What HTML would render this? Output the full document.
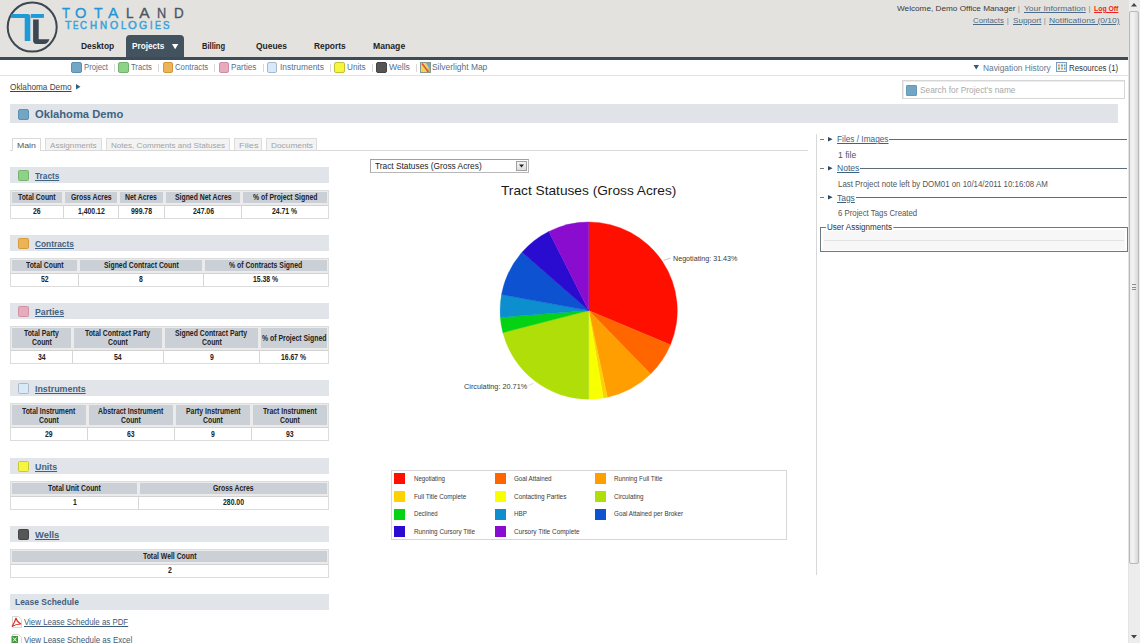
<!DOCTYPE html>
<html><head><meta charset="utf-8"><style>
html,body{margin:0;padding:0;}
body{width:1140px;height:643px;overflow:hidden;position:relative;background:#fff;font-family:"Liberation Sans", sans-serif;}
div,span,svg{box-sizing:border-box;}
</style></head><body>
<div style="position:absolute;left:0px;top:0px;width:1128px;height:57px;background:#e4e2de;"></div>
<div style="position:absolute;left:0px;top:57px;width:1128px;height:3px;background:#3c4b56;"></div>
<div style="position:absolute;left:126px;top:35px;width:58px;height:22px;background:#42525e;border-radius:4px 4px 0 0;"></div>
<svg style="position:absolute;left:0;top:0" width="60" height="56" viewBox="0 0 60 56">
<circle cx="32.2" cy="27.1" r="24.5" fill="none" stroke="#3b4752" stroke-width="2"/>
<path d="M11.2 14 H27.5 Q30.3 14 30.3 16.8 V41 H24.7 V17.9 H11.2 Z" fill="#1e9ad6"/>
<rect x="30.8" y="14" width="13.1" height="3.9" fill="#1e9ad6"/>
<path d="M33.1 19.6 H38.7 V39.2 H49.5 Q48 43.9 44 43.9 H36.5 Q33.1 43.9 33.1 40.5 Z" fill="#3b4752"/>
</svg>
<div style="position:absolute;left:0px;top:75px;width:1128px;height:1px;background:#e2e2e2;"></div>
<div style="position:absolute;left:1128px;top:0px;width:12px;height:643px;background:#ededed;border-left:1px solid #e3e3e3;"></div>
<div style="position:absolute;left:1129px;top:11px;width:10px;height:553px;background:linear-gradient(90deg,#e9e9e9,#f4f4f4 35%,#d9d9dd);border:1px solid #b9b9b9;border-radius:2px;"></div>
<div style="position:absolute;left:1132px;top:284px;width:4px;height:1.2px;background:#8c8c8c;"></div>
<div style="position:absolute;left:1132px;top:286.5px;width:4px;height:1.2px;background:#8c8c8c;"></div>
<div style="position:absolute;left:1132px;top:289px;width:4px;height:1.2px;background:#8c8c8c;"></div>
<svg style="position:absolute;left:1131px;top:3px" width="6" height="4"><path d="M0 3.5 L3 0 L6 3.5Z" fill="#444"/></svg>
<svg style="position:absolute;left:1131px;top:635px" width="6" height="4"><path d="M0 0 L3 3.5 L6 0Z" fill="#444"/></svg>
<div style="position:absolute;left:10px;top:104px;width:1108px;height:19px;background:#e0e3e7;"></div>
<div style="position:absolute;left:18px;top:109px;width:11px;height:11px;background:#73a6c5;border:1px solid #5d91b3;border-radius:2px;"></div>
<div style="position:absolute;left:902px;top:80px;width:223px;height:19px;background:#fff;border:1px solid #d6d6d6;box-shadow:inset 1px 1px 0 #ececec;"></div>
<div style="position:absolute;left:906px;top:85px;width:11px;height:11px;background:#73a6c5;border:1px solid #6699b9;border-radius:1px;"></div>
<div style="position:absolute;left:10px;top:150px;width:798px;height:1px;background:#d9d9d9;"></div>
<div style="position:absolute;left:12px;top:138px;width:29px;height:13px;background:#fff;border:1px solid #d9d9d9;border-bottom:none;"></div>
<div style="position:absolute;left:45px;top:138px;width:57px;height:12px;background:#f3f3f3;border:1px solid #dcdcdc;border-bottom:none;"></div>
<div style="position:absolute;left:106px;top:138px;width:124px;height:12px;background:#f3f3f3;border:1px solid #dcdcdc;border-bottom:none;"></div>
<div style="position:absolute;left:234px;top:138px;width:28px;height:12px;background:#f3f3f3;border:1px solid #dcdcdc;border-bottom:none;"></div>
<div style="position:absolute;left:266px;top:138px;width:51px;height:12px;background:#f3f3f3;border:1px solid #dcdcdc;border-bottom:none;"></div>
<div style="position:absolute;left:816px;top:134px;width:1px;height:441px;background:#d8d8d8;"></div>
<div style="position:absolute;left:10px;top:167px;width:319px;height:16px;background:#e1e4e8;"></div>
<div style="position:absolute;left:18px;top:170px;width:11px;height:11px;background:#8fd08a;border:1px solid #73b56e;border-radius:1.5px;"></div>
<div style="position:absolute;left:10px;top:190px;width:319px;height:29px;background:#fff;border:1px solid #dcdcdc;"></div>
<div style="position:absolute;left:11px;top:191px;width:317px;height:14px;background:#ebebeb;"></div>
<div style="position:absolute;left:11px;top:205px;width:317px;height:1px;background:#d2d2d2;"></div>
<div style="position:absolute;left:12px;top:192px;width:50px;height:11px;background:#cad0d6;"></div>
<div style="position:absolute;left:65px;top:192px;width:52px;height:11px;background:#cad0d6;"></div>
<div style="position:absolute;left:120px;top:192px;width:43px;height:11px;background:#cad0d6;"></div>
<div style="position:absolute;left:166px;top:192px;width:74px;height:11px;background:#cad0d6;"></div>
<div style="position:absolute;left:243px;top:192px;width:84px;height:11px;background:#cad0d6;"></div>
<div style="position:absolute;left:63px;top:205px;width:1px;height:13px;background:#d6d6d6;"></div>
<div style="position:absolute;left:118px;top:205px;width:1px;height:13px;background:#d6d6d6;"></div>
<div style="position:absolute;left:164px;top:205px;width:1px;height:13px;background:#d6d6d6;"></div>
<div style="position:absolute;left:241px;top:205px;width:1px;height:13px;background:#d6d6d6;"></div>
<div style="position:absolute;left:10px;top:235px;width:319px;height:16px;background:#e1e4e8;"></div>
<div style="position:absolute;left:18px;top:238px;width:11px;height:11px;background:#eeb356;border:1px solid #d39a3e;border-radius:1.5px;"></div>
<div style="position:absolute;left:10px;top:258px;width:319px;height:29px;background:#fff;border:1px solid #dcdcdc;"></div>
<div style="position:absolute;left:11px;top:259px;width:317px;height:14px;background:#ebebeb;"></div>
<div style="position:absolute;left:11px;top:273px;width:317px;height:1px;background:#d2d2d2;"></div>
<div style="position:absolute;left:12px;top:260px;width:65px;height:11px;background:#cad0d6;"></div>
<div style="position:absolute;left:80px;top:260px;width:122px;height:11px;background:#cad0d6;"></div>
<div style="position:absolute;left:205px;top:260px;width:122px;height:11px;background:#cad0d6;"></div>
<div style="position:absolute;left:78px;top:273px;width:1px;height:13px;background:#d6d6d6;"></div>
<div style="position:absolute;left:203px;top:273px;width:1px;height:13px;background:#d6d6d6;"></div>
<div style="position:absolute;left:10px;top:303px;width:319px;height:16px;background:#e1e4e8;"></div>
<div style="position:absolute;left:18px;top:306px;width:11px;height:11px;background:#e8aabd;border:1px solid #cf92a5;border-radius:1.5px;"></div>
<div style="position:absolute;left:10px;top:326px;width:319px;height:38px;background:#fff;border:1px solid #dcdcdc;"></div>
<div style="position:absolute;left:11px;top:327px;width:317px;height:23px;background:#ebebeb;"></div>
<div style="position:absolute;left:11px;top:350px;width:317px;height:1px;background:#d2d2d2;"></div>
<div style="position:absolute;left:12px;top:328px;width:59px;height:20px;background:#cad0d6;"></div>
<div style="position:absolute;left:74px;top:328px;width:88px;height:20px;background:#cad0d6;"></div>
<div style="position:absolute;left:165px;top:328px;width:93px;height:20px;background:#cad0d6;"></div>
<div style="position:absolute;left:261px;top:328px;width:66px;height:20px;background:#cad0d6;"></div>
<div style="position:absolute;left:72px;top:350px;width:1px;height:13px;background:#d6d6d6;"></div>
<div style="position:absolute;left:163px;top:350px;width:1px;height:13px;background:#d6d6d6;"></div>
<div style="position:absolute;left:259px;top:350px;width:1px;height:13px;background:#d6d6d6;"></div>
<div style="position:absolute;left:10px;top:380px;width:319px;height:16px;background:#e1e4e8;"></div>
<div style="position:absolute;left:18px;top:383px;width:11px;height:11px;background:#d8e9f8;border:1px solid #a9b9c8;border-radius:1.5px;"></div>
<div style="position:absolute;left:10px;top:403px;width:319px;height:38px;background:#fff;border:1px solid #dcdcdc;"></div>
<div style="position:absolute;left:11px;top:404px;width:317px;height:23px;background:#ebebeb;"></div>
<div style="position:absolute;left:11px;top:427px;width:317px;height:1px;background:#d2d2d2;"></div>
<div style="position:absolute;left:12px;top:405px;width:74px;height:20px;background:#cad0d6;"></div>
<div style="position:absolute;left:89px;top:405px;width:84px;height:20px;background:#cad0d6;"></div>
<div style="position:absolute;left:176px;top:405px;width:74px;height:20px;background:#cad0d6;"></div>
<div style="position:absolute;left:253px;top:405px;width:74px;height:20px;background:#cad0d6;"></div>
<div style="position:absolute;left:87px;top:427px;width:1px;height:13px;background:#d6d6d6;"></div>
<div style="position:absolute;left:174px;top:427px;width:1px;height:13px;background:#d6d6d6;"></div>
<div style="position:absolute;left:251px;top:427px;width:1px;height:13px;background:#d6d6d6;"></div>
<div style="position:absolute;left:10px;top:458px;width:319px;height:16px;background:#e1e4e8;"></div>
<div style="position:absolute;left:18px;top:461px;width:11px;height:11px;background:#f6f540;border:1px solid #c9c833;border-radius:1.5px;"></div>
<div style="position:absolute;left:10px;top:481px;width:319px;height:29px;background:#fff;border:1px solid #dcdcdc;"></div>
<div style="position:absolute;left:11px;top:482px;width:317px;height:14px;background:#ebebeb;"></div>
<div style="position:absolute;left:11px;top:496px;width:317px;height:1px;background:#d2d2d2;"></div>
<div style="position:absolute;left:12px;top:483px;width:125px;height:11px;background:#cad0d6;"></div>
<div style="position:absolute;left:140px;top:483px;width:187px;height:11px;background:#cad0d6;"></div>
<div style="position:absolute;left:138px;top:496px;width:1px;height:13px;background:#d6d6d6;"></div>
<div style="position:absolute;left:10px;top:526px;width:319px;height:16px;background:#e1e4e8;"></div>
<div style="position:absolute;left:18px;top:529px;width:11px;height:11px;background:#565656;border:1px solid #444;border-radius:1.5px;"></div>
<div style="position:absolute;left:10px;top:549px;width:319px;height:29px;background:#fff;border:1px solid #dcdcdc;"></div>
<div style="position:absolute;left:11px;top:550px;width:317px;height:14px;background:#ebebeb;"></div>
<div style="position:absolute;left:11px;top:564px;width:317px;height:1px;background:#d2d2d2;"></div>
<div style="position:absolute;left:12px;top:551px;width:315px;height:11px;background:#cad0d6;"></div>
<div style="position:absolute;left:10px;top:594px;width:319px;height:16px;background:#e1e4e8;"></div>
<div style="position:absolute;left:370px;top:159px;width:159px;height:14px;background:#fff;border:1px solid #b8b8b8;border-top-color:#a0a0a0;border-left-color:#a8a8a8;"></div>
<div style="position:absolute;left:516px;top:161px;width:11px;height:10px;background:linear-gradient(#f3f3f3,#dedede);border:1px solid #a0a0a0;"></div>
<svg style="position:absolute;left:519px;top:164px" width="6" height="4"><path d="M0 0.5 L5 0.5 L2.5 3.5Z" fill="#222"/></svg>
<svg style="position:absolute;left:0;top:0" width="1140" height="643"><path d="M588.70 310.60 L588.70 222.00 A88.6 88.6 0 0 1 670.44 344.79 Z" fill="#FF0F00" stroke="#FF0F00" stroke-width="0.4" stroke-linejoin="round"/><path d="M588.70 310.60 L670.44 344.79 A88.6 88.6 0 0 1 650.58 374.01 Z" fill="#FF6600" stroke="#FF6600" stroke-width="0.4" stroke-linejoin="round"/><path d="M588.70 310.60 L650.58 374.01 A88.6 88.6 0 0 1 607.42 397.20 Z" fill="#FF9E01" stroke="#FF9E01" stroke-width="0.4" stroke-linejoin="round"/><path d="M588.70 310.60 L607.42 397.20 A88.6 88.6 0 0 1 603.32 397.98 Z" fill="#FCD202" stroke="#FCD202" stroke-width="0.4" stroke-linejoin="round"/><path d="M588.70 310.60 L603.32 397.98 A88.6 88.6 0 0 1 588.70 399.20 Z" fill="#F8FF01" stroke="#F8FF01" stroke-width="0.4" stroke-linejoin="round"/><path d="M588.70 310.60 L588.70 399.20 A88.6 88.6 0 0 1 502.88 332.63 Z" fill="#B0DE09" stroke="#B0DE09" stroke-width="0.4" stroke-linejoin="round"/><path d="M588.70 310.60 L502.88 332.63 A88.6 88.6 0 0 1 500.36 317.40 Z" fill="#04D215" stroke="#04D215" stroke-width="0.4" stroke-linejoin="round"/><path d="M588.70 310.60 L500.36 317.40 A88.6 88.6 0 0 1 501.56 294.61 Z" fill="#0D8ECF" stroke="#0D8ECF" stroke-width="0.4" stroke-linejoin="round"/><path d="M588.70 310.60 L501.56 294.61 A88.6 88.6 0 0 1 522.04 252.24 Z" fill="#0D52D1" stroke="#0D52D1" stroke-width="0.4" stroke-linejoin="round"/><path d="M588.70 310.60 L522.04 252.24 A88.6 88.6 0 0 1 548.89 231.45 Z" fill="#2A0CD0" stroke="#2A0CD0" stroke-width="0.4" stroke-linejoin="round"/><path d="M588.70 310.60 L548.89 231.45 A88.6 88.6 0 0 1 588.70 222.00 Z" fill="#8A0CCF" stroke="#8A0CCF" stroke-width="0.4" stroke-linejoin="round"/><path d="M663.5 260.5 L670.5 258" stroke="#bbb" stroke-width="0.8" fill="none"/><path d="M528.5 385.5 L533.5 383.3" stroke="#d0d0d0" stroke-width="0.8" fill="none"/></svg>
<div style="position:absolute;left:391px;top:470px;width:396px;height:70px;background:#fff;border:1px solid #d6d6d6;"></div>
<div style="position:absolute;left:394.2px;top:473px;width:11px;height:11px;background:#FF0F00;"></div>
<div style="position:absolute;left:494.9px;top:473px;width:11px;height:11px;background:#FF6600;"></div>
<div style="position:absolute;left:595px;top:473px;width:11px;height:11px;background:#FF9E01;"></div>
<div style="position:absolute;left:394.2px;top:491px;width:11px;height:11px;background:#FCD202;"></div>
<div style="position:absolute;left:494.9px;top:491px;width:11px;height:11px;background:#F8FF01;"></div>
<div style="position:absolute;left:595px;top:491px;width:11px;height:11px;background:#B0DE09;"></div>
<div style="position:absolute;left:394.2px;top:508.6px;width:11px;height:11px;background:#04D215;"></div>
<div style="position:absolute;left:494.9px;top:508.6px;width:11px;height:11px;background:#0D8ECF;"></div>
<div style="position:absolute;left:595px;top:508.6px;width:11px;height:11px;background:#0D52D1;"></div>
<div style="position:absolute;left:394.2px;top:526.1px;width:11px;height:11px;background:#2A0CD0;"></div>
<div style="position:absolute;left:494.9px;top:526.1px;width:11px;height:11px;background:#8A0CCF;"></div>
<div style="position:absolute;left:820px;top:139px;width:4px;height:1px;background:#777;"></div>
<svg style="position:absolute;left:828px;top:136.5px" width="5" height="5"><path d="M0 0 L4.6 2.3 L0 4.6Z" fill="#2b4a66"/></svg>
<div style="position:absolute;left:820px;top:168px;width:4px;height:1px;background:#777;"></div>
<svg style="position:absolute;left:828px;top:165.5px" width="5" height="5"><path d="M0 0 L4.6 2.3 L0 4.6Z" fill="#2b4a66"/></svg>
<div style="position:absolute;left:820px;top:197px;width:4px;height:1px;background:#777;"></div>
<svg style="position:absolute;left:828px;top:194.5px" width="5" height="5"><path d="M0 0 L4.6 2.3 L0 4.6Z" fill="#2b4a66"/></svg>
<div style="position:absolute;left:889px;top:139px;width:238px;height:1px;background:#5d6e7a;"></div>
<div style="position:absolute;left:860px;top:168px;width:267px;height:1px;background:#5d6e7a;"></div>
<div style="position:absolute;left:856px;top:197px;width:271px;height:1px;background:#5d6e7a;"></div>
<div style="position:absolute;left:820px;top:227px;width:308px;height:25px;border:1px solid #6c7a84;"></div>
<div style="position:absolute;left:823px;top:230px;width:302px;height:20px;background:#f7f7f7;"></div>
<div style="position:absolute;left:824px;top:240px;width:300px;height:1px;background:#e2e2e2;"></div>
<svg style="position:absolute;left:172px;top:43.5px" width="7" height="6"><path d="M0 0 H6.3 L3.15 5.2Z" fill="#fff"/></svg>
<div style="position:absolute;left:71.4px;top:62px;width:10.5px;height:10.5px;background:#72a7c6;border:1px solid #5b8fb0;border-radius:2px;"></div>
<div style="position:absolute;left:118.1px;top:62px;width:10.5px;height:10.5px;background:#8fd08a;border:1px solid #6fb36a;border-radius:2px;"></div>
<div style="position:absolute;left:162.6px;top:62px;width:10.5px;height:10.5px;background:#eeb356;border:1px solid #d0973b;border-radius:2px;"></div>
<div style="position:absolute;left:218.7px;top:62px;width:10.5px;height:10.5px;background:#e8aabd;border:1px solid #c990a3;border-radius:2px;"></div>
<div style="position:absolute;left:266.8px;top:62px;width:10.5px;height:10.5px;background:#d8e9fb;border:1px solid #a8b8c8;border-radius:2px;"></div>
<div style="position:absolute;left:334.3px;top:62px;width:10.5px;height:10.5px;background:#f7f53e;border:1px solid #c3c233;border-radius:2px;"></div>
<div style="position:absolute;left:376.3px;top:62px;width:10.5px;height:10.5px;background:#555555;border:1px solid #444444;border-radius:2px;"></div>
<svg style="position:absolute;left:420px;top:62px" width="11" height="11" viewBox="0 0 11 11">
<rect x="0.5" y="0.5" width="10" height="10" fill="#9fd06a" stroke="#8a9a88"/>
<path d="M1 1 H10 V5 L6 10 H1Z" fill="#f2d45c"/><path d="M6 1 H10 V8Z" fill="#6aa8e0"/>
<path d="M2 1.5 L8.5 10" stroke="#e0503a" stroke-width="1.6"/></svg>
<div style="position:absolute;left:114px;top:64px;width:1px;height:8px;background:#d8d8d8;"></div>
<div style="position:absolute;left:158px;top:64px;width:1px;height:8px;background:#d8d8d8;"></div>
<div style="position:absolute;left:214px;top:64px;width:1px;height:8px;background:#d8d8d8;"></div>
<div style="position:absolute;left:263px;top:64px;width:1px;height:8px;background:#d8d8d8;"></div>
<div style="position:absolute;left:330px;top:64px;width:1px;height:8px;background:#d8d8d8;"></div>
<div style="position:absolute;left:372px;top:64px;width:1px;height:8px;background:#d8d8d8;"></div>
<div style="position:absolute;left:416px;top:64px;width:1px;height:8px;background:#d8d8d8;"></div>
<svg style="position:absolute;left:973px;top:65px" width="7" height="5"><path d="M0.5 0 H6 L3.25 4.5Z" fill="#2c5a80"/></svg>
<svg style="position:absolute;left:1056px;top:62px" width="11" height="10" viewBox="0 0 11 10">
<rect x="0.5" y="0.5" width="10" height="9" fill="#eef3fb" stroke="#7d9cc4"/>
<rect x="2" y="2.5" width="2" height="2" fill="#e5a23a"/><rect x="5" y="2.5" width="2" height="2" fill="#5a9ad8"/><rect x="8" y="2.5" width="1.5" height="2" fill="#6fb06a"/>
<rect x="2" y="5.5" width="2" height="2" fill="#6fb06a"/><rect x="5" y="5.5" width="2" height="2" fill="#e5a23a"/><rect x="8" y="5.5" width="1.5" height="2" fill="#5a9ad8"/></svg>
<svg style="position:absolute;left:76px;top:84px" width="5" height="6"><path d="M0 0 L4.5 2.75 L0 5.5Z" fill="#2e5f86"/></svg>
<svg style="position:absolute;left:11px;top:616px" width="11" height="12" viewBox="0 0 11 12">
<path d="M1.5 0.5 H7.5 L10.5 3.5 V11.5 H1.5Z" fill="#fff" stroke="#ccc" stroke-width="0.8"/>
<path d="M1 10.5 Q4 6 5 2 Q6 6 10 8 Q5 8 1 10.5Z" fill="none" stroke="#d8322a" stroke-width="1.2"/></svg>
<svg style="position:absolute;left:11px;top:634px" width="11" height="12" viewBox="0 0 11 12">
<path d="M1.5 0.5 H7.5 L10.5 3.5 V11.5 H1.5Z" fill="#fff" stroke="#ccc" stroke-width="0.8"/>
<rect x="0.5" y="2" width="6.5" height="7" fill="#3f9a3a"/><path d="M2 3.5 L5.5 7.5 M5.5 3.5 L2 7.5" stroke="#fff" stroke-width="1"/></svg>
<span id="t0" style="position:absolute;top:5.48px;font-size:15.5px;line-height:15.5px;color:#2196d6;white-space:nowrap;-webkit-text-stroke:0.35px #2196d6;left:61.70px;transform:scaleX(0.8449);transform-origin:0 0;">T</span>
<span id="t1" style="position:absolute;top:5.48px;font-size:15.5px;line-height:15.5px;color:#2196d6;white-space:nowrap;-webkit-text-stroke:0.35px #2196d6;left:75.40px;transform:scaleX(0.9451);transform-origin:0 0;">O</span>
<span id="t2" style="position:absolute;top:5.48px;font-size:15.5px;line-height:15.5px;color:#2196d6;white-space:nowrap;-webkit-text-stroke:0.35px #2196d6;left:93.60px;transform:scaleX(0.9083);transform-origin:0 0;">T</span>
<span id="t3" style="position:absolute;top:5.48px;font-size:15.5px;line-height:15.5px;color:#2196d6;white-space:nowrap;-webkit-text-stroke:0.35px #2196d6;left:107.90px;">A</span>
<span id="t4" style="position:absolute;top:5.48px;font-size:15.5px;line-height:15.5px;color:#4b5661;white-space:nowrap;-webkit-text-stroke:0.35px #4b5661;left:125.50px;transform:scaleX(0.8696);transform-origin:0 0;">L</span>
<span id="t5" style="position:absolute;top:5.48px;font-size:15.5px;line-height:15.5px;color:#4b5661;white-space:nowrap;-webkit-text-stroke:0.35px #4b5661;left:139.20px;">A</span>
<span id="t6" style="position:absolute;top:5.48px;font-size:15.5px;line-height:15.5px;color:#4b5661;white-space:nowrap;-webkit-text-stroke:0.35px #4b5661;left:156.90px;transform:scaleX(0.8212);transform-origin:0 0;">N</span>
<span id="t7" style="position:absolute;top:5.48px;font-size:15.5px;line-height:15.5px;color:#4b5661;white-space:nowrap;-webkit-text-stroke:0.35px #4b5661;left:174.00px;transform:scaleX(0.8658);transform-origin:0 0;">D</span>
<span id="t8" style="position:absolute;top:20.87px;font-size:10.2px;line-height:10.2px;color:#3aa2dc;white-space:nowrap;-webkit-text-stroke:0.5px #3aa2dc;left:65.00px;transform:scaleX(1.0426);transform-origin:0 0;">T</span>
<span id="t9" style="position:absolute;top:20.87px;font-size:10.2px;line-height:10.2px;color:#3aa2dc;white-space:nowrap;-webkit-text-stroke:0.5px #3aa2dc;left:73.00px;transform:scaleX(0.7945);transform-origin:0 0;">E</span>
<span id="t10" style="position:absolute;top:20.87px;font-size:10.2px;line-height:10.2px;color:#3aa2dc;white-space:nowrap;-webkit-text-stroke:0.5px #3aa2dc;left:80.40px;transform:scaleX(0.9512);transform-origin:0 0;">C</span>
<span id="t11" style="position:absolute;top:20.87px;font-size:10.2px;line-height:10.2px;color:#3aa2dc;white-space:nowrap;-webkit-text-stroke:0.5px #3aa2dc;left:90.10px;transform:scaleX(0.9648);transform-origin:0 0;">H</span>
<span id="t12" style="position:absolute;top:20.87px;font-size:10.2px;line-height:10.2px;color:#3aa2dc;white-space:nowrap;-webkit-text-stroke:0.5px #3aa2dc;left:99.80px;transform:scaleX(0.9648);transform-origin:0 0;">N</span>
<span id="t13" style="position:absolute;top:20.87px;font-size:10.2px;line-height:10.2px;color:#3aa2dc;white-space:nowrap;-webkit-text-stroke:0.5px #3aa2dc;left:109.50px;transform:scaleX(1.0331);transform-origin:0 0;">O</span>
<span id="t14" style="position:absolute;top:20.87px;font-size:10.2px;line-height:10.2px;color:#3aa2dc;white-space:nowrap;-webkit-text-stroke:0.5px #3aa2dc;left:120.90px;transform:scaleX(0.9344);transform-origin:0 0;">L</span>
<span id="t15" style="position:absolute;top:20.87px;font-size:10.2px;line-height:10.2px;color:#3aa2dc;white-space:nowrap;-webkit-text-stroke:0.5px #3aa2dc;left:127.70px;transform:scaleX(1.1087);transform-origin:0 0;">O</span>
<span id="t16" style="position:absolute;top:20.87px;font-size:10.2px;line-height:10.2px;color:#3aa2dc;white-space:nowrap;-webkit-text-stroke:0.5px #3aa2dc;left:139.10px;transform:scaleX(1.0331);transform-origin:0 0;">G</span>
<span id="t17" style="position:absolute;top:20.87px;font-size:10.2px;line-height:10.2px;color:#3aa2dc;white-space:nowrap;-webkit-text-stroke:0.5px #3aa2dc;left:150.00px;transform:scaleX(0.8791);transform-origin:0 0;">I</span>
<span id="t18" style="position:absolute;top:20.87px;font-size:10.2px;line-height:10.2px;color:#3aa2dc;white-space:nowrap;-webkit-text-stroke:0.5px #3aa2dc;left:154.50px;transform:scaleX(0.8680);transform-origin:0 0;">E</span>
<span id="t19" style="position:absolute;top:20.87px;font-size:10.2px;line-height:10.2px;color:#3aa2dc;white-space:nowrap;-webkit-text-stroke:0.5px #3aa2dc;left:163.10px;transform:scaleX(0.9563);transform-origin:0 0;">S</span>
<span id="t20" style="position:absolute;top:4.83px;font-size:8px;line-height:8px;color:#3a3a3a;white-space:nowrap;left:896.80px;transform:scaleX(1.0238);transform-origin:0 0;">Welcome, Demo Office Manager</span>
<span id="t21" style="position:absolute;top:4.83px;font-size:8px;line-height:8px;color:#888;white-space:nowrap;left:1017.76px;">|</span>
<span id="t22" style="position:absolute;top:4.83px;font-size:8px;line-height:8px;color:#4d6b86;white-space:nowrap;text-decoration:underline;left:1023.70px;transform:scaleX(1.0564);transform-origin:0 0;">Your Information</span>
<span id="t23" style="position:absolute;top:4.83px;font-size:8px;line-height:8px;color:#888;white-space:nowrap;left:1088.56px;">|</span>
<span id="t24" style="position:absolute;top:4.83px;font-size:8px;line-height:8px;color:#ee2222;white-space:nowrap;font-weight:bold;text-decoration:underline;left:1093.80px;transform:scaleX(0.8580);transform-origin:0 0;">Log Off</span>
<span id="t25" style="position:absolute;top:16.83px;font-size:8px;line-height:8px;color:#4d6b86;white-space:nowrap;text-decoration:underline;left:973.20px;transform:scaleX(0.9754);transform-origin:0 0;">Contacts</span>
<span id="t26" style="position:absolute;top:16.83px;font-size:8px;line-height:8px;color:#888;white-space:nowrap;left:1006.86px;">|</span>
<span id="t27" style="position:absolute;top:16.83px;font-size:8px;line-height:8px;color:#4d6b86;white-space:nowrap;text-decoration:underline;left:1012.70px;transform:scaleX(1.0096);transform-origin:0 0;">Support</span>
<span id="t28" style="position:absolute;top:16.83px;font-size:8px;line-height:8px;color:#888;white-space:nowrap;left:1043.66px;">|</span>
<span id="t29" style="position:absolute;top:16.83px;font-size:8px;line-height:8px;color:#4d6b86;white-space:nowrap;text-decoration:underline;left:1049.40px;transform:scaleX(1.0584);transform-origin:0 0;">Notifications (0/10)</span>
<span id="t30" style="position:absolute;top:41.58px;font-size:9px;line-height:9px;color:#1e1e1e;white-space:nowrap;font-weight:bold;left:80.60px;transform:scaleX(0.9348);transform-origin:0 0;">Desktop</span>
<span id="t31" style="position:absolute;top:41.58px;font-size:9px;line-height:9px;color:#ffffff;white-space:nowrap;font-weight:bold;left:132.40px;transform:scaleX(0.9119);transform-origin:0 0;">Projects</span>
<span id="t32" style="position:absolute;top:41.58px;font-size:9px;line-height:9px;color:#1e1e1e;white-space:nowrap;font-weight:bold;left:201.70px;transform:scaleX(0.8400);transform-origin:0 0;">Billing</span>
<span id="t33" style="position:absolute;top:41.58px;font-size:9px;line-height:9px;color:#1e1e1e;white-space:nowrap;font-weight:bold;left:256.40px;transform:scaleX(0.9389);transform-origin:0 0;">Queues</span>
<span id="t34" style="position:absolute;top:41.58px;font-size:9px;line-height:9px;color:#1e1e1e;white-space:nowrap;font-weight:bold;left:314.30px;transform:scaleX(0.9290);transform-origin:0 0;">Reports</span>
<span id="t35" style="position:absolute;top:41.58px;font-size:9px;line-height:9px;color:#1e1e1e;white-space:nowrap;font-weight:bold;left:372.60px;transform:scaleX(0.9607);transform-origin:0 0;">Manage</span>
<span id="t36" style="position:absolute;top:62.60px;font-size:8.5px;line-height:8.5px;color:#54708a;white-space:nowrap;left:83.70px;transform:scaleX(0.9067);transform-origin:0 0;">Project</span>
<span id="t37" style="position:absolute;top:62.60px;font-size:8.5px;line-height:8.5px;color:#54708a;white-space:nowrap;left:130.70px;transform:scaleX(0.8971);transform-origin:0 0;">Tracts</span>
<span id="t38" style="position:absolute;top:62.60px;font-size:8.5px;line-height:8.5px;color:#54708a;white-space:nowrap;left:174.80px;transform:scaleX(0.9127);transform-origin:0 0;">Contracts</span>
<span id="t39" style="position:absolute;top:62.60px;font-size:8.5px;line-height:8.5px;color:#54708a;white-space:nowrap;left:230.80px;transform:scaleX(0.9558);transform-origin:0 0;">Parties</span>
<span id="t40" style="position:absolute;top:62.60px;font-size:8.5px;line-height:8.5px;color:#54708a;white-space:nowrap;left:279.50px;transform:scaleX(0.9886);transform-origin:0 0;">Instruments</span>
<span id="t41" style="position:absolute;top:62.60px;font-size:8.5px;line-height:8.5px;color:#54708a;white-space:nowrap;left:346.60px;transform:scaleX(0.9600);transform-origin:0 0;">Units</span>
<span id="t42" style="position:absolute;top:62.60px;font-size:8.5px;line-height:8.5px;color:#54708a;white-space:nowrap;left:388.60px;transform:scaleX(1.0133);transform-origin:0 0;">Wells</span>
<span id="t43" style="position:absolute;top:62.60px;font-size:8.5px;line-height:8.5px;color:#54708a;white-space:nowrap;left:432.40px;transform:scaleX(0.9919);transform-origin:0 0;">Silverlight Map</span>
<span id="t44" style="position:absolute;top:63.50px;font-size:8.5px;line-height:8.5px;color:#62798f;white-space:nowrap;left:983.00px;transform:scaleX(0.9814);transform-origin:0 0;">Navigation History</span>
<span id="t45" style="position:absolute;top:63.50px;font-size:8.5px;line-height:8.5px;color:#333;white-space:nowrap;left:1068.80px;transform:scaleX(0.9215);transform-origin:0 0;">Resources (1)</span>
<span id="t46" style="position:absolute;top:85.80px;font-size:8.5px;line-height:8.5px;color:#a9a9a9;white-space:nowrap;left:919.50px;transform:scaleX(0.9792);transform-origin:0 0;">Search for Project's name</span>
<span id="t47" style="position:absolute;top:82.99px;font-size:8.4px;line-height:8.4px;color:#444;white-space:nowrap;text-decoration:underline;left:10.20px;transform:scaleX(0.9802);transform-origin:0 0;">Oklahoma Demo</span>
<span id="t48" style="position:absolute;top:108.69px;font-size:11px;line-height:11px;color:#3e6383;white-space:nowrap;font-weight:bold;left:35.00px;transform:scaleX(1.0171);transform-origin:0 0;">Oklahoma Demo</span>
<span id="t49" style="position:absolute;top:141.83px;font-size:8px;line-height:8px;color:#555;white-space:nowrap;left:17.00px;transform:scaleX(1.0897);transform-origin:0 0;">Main</span>
<span id="t50" style="position:absolute;top:141.83px;font-size:8px;line-height:8px;color:#a3a3a3;white-space:nowrap;left:49.90px;transform:scaleX(1.0154);transform-origin:0 0;">Assignments</span>
<span id="t51" style="position:absolute;top:141.83px;font-size:8px;line-height:8px;color:#a3a3a3;white-space:nowrap;left:111.00px;transform:scaleX(1.0093);transform-origin:0 0;">Notes, Comments and Statuses</span>
<span id="t52" style="position:absolute;top:141.83px;font-size:8px;line-height:8px;color:#a3a3a3;white-space:nowrap;left:238.50px;transform:scaleX(1.1545);transform-origin:0 0;">Files</span>
<span id="t53" style="position:absolute;top:141.83px;font-size:8px;line-height:8px;color:#a3a3a3;white-space:nowrap;left:270.50px;transform:scaleX(1.0378);transform-origin:0 0;">Documents</span>
<span id="t54" style="position:absolute;top:171.16px;font-size:9.5px;line-height:9.5px;color:#3e6282;white-space:nowrap;font-weight:bold;text-decoration:underline;left:34.60px;transform:scaleX(0.8679);transform-origin:0 0;">Tracts</span>
<span id="t55" style="position:absolute;top:239.16px;font-size:9.5px;line-height:9.5px;color:#3e6282;white-space:nowrap;font-weight:bold;text-decoration:underline;left:34.80px;transform:scaleX(0.8772);transform-origin:0 0;">Contracts</span>
<span id="t56" style="position:absolute;top:307.16px;font-size:9.5px;line-height:9.5px;color:#3e6282;white-space:nowrap;font-weight:bold;text-decoration:underline;left:34.80px;transform:scaleX(0.9152);transform-origin:0 0;">Parties</span>
<span id="t57" style="position:absolute;top:384.16px;font-size:9.5px;line-height:9.5px;color:#3e6282;white-space:nowrap;font-weight:bold;text-decoration:underline;left:34.80px;transform:scaleX(0.9324);transform-origin:0 0;">Instruments</span>
<span id="t58" style="position:absolute;top:462.16px;font-size:9.5px;line-height:9.5px;color:#3e6282;white-space:nowrap;font-weight:bold;text-decoration:underline;left:34.80px;transform:scaleX(0.9305);transform-origin:0 0;">Units</span>
<span id="t59" style="position:absolute;top:530.16px;font-size:9.5px;line-height:9.5px;color:#3e6282;white-space:nowrap;font-weight:bold;text-decoration:underline;left:34.80px;transform:scaleX(0.9862);transform-origin:0 0;">Wells</span>
<span id="t60" style="position:absolute;top:596.96px;font-size:9.5px;line-height:9.5px;color:#3e5f7e;white-space:nowrap;font-weight:bold;left:14.50px;transform:scaleX(0.8898);transform-origin:0 0;">Lease Schedule</span>
<span id="t61" style="position:absolute;top:193.29px;font-size:8.4px;line-height:8.4px;color:#222;white-space:nowrap;font-weight:bold;left:18.20px;transform:scaleX(0.8190);transform-origin:0 0;">Total Count</span>
<span id="t62" style="position:absolute;top:207.39px;font-size:8.4px;line-height:8.4px;color:#222;white-space:nowrap;font-weight:bold;left:33.18px;transform:scaleX(0.8190);transform-origin:0 0;">26</span>
<span id="t63" style="position:absolute;top:193.29px;font-size:8.4px;line-height:8.4px;color:#222;white-space:nowrap;font-weight:bold;left:70.72px;transform:scaleX(0.8190);transform-origin:0 0;">Gross Acres</span>
<span id="t64" style="position:absolute;top:207.39px;font-size:8.4px;line-height:8.4px;color:#222;white-space:nowrap;font-weight:bold;left:77.65px;transform:scaleX(0.8190);transform-origin:0 0;">1,400.12</span>
<span id="t65" style="position:absolute;top:193.29px;font-size:8.4px;line-height:8.4px;color:#222;white-space:nowrap;font-weight:bold;left:125.11px;transform:scaleX(0.8190);transform-origin:0 0;">Net Acres</span>
<span id="t66" style="position:absolute;top:207.39px;font-size:8.4px;line-height:8.4px;color:#222;white-space:nowrap;font-weight:bold;left:130.51px;transform:scaleX(0.8190);transform-origin:0 0;">999.78</span>
<span id="t67" style="position:absolute;top:193.29px;font-size:8.4px;line-height:8.4px;color:#222;white-space:nowrap;font-weight:bold;left:175.22px;transform:scaleX(0.8190);transform-origin:0 0;">Signed Net Acres</span>
<span id="t68" style="position:absolute;top:207.39px;font-size:8.4px;line-height:8.4px;color:#222;white-space:nowrap;font-weight:bold;left:193.01px;transform:scaleX(0.8190);transform-origin:0 0;">247.06</span>
<span id="t69" style="position:absolute;top:193.29px;font-size:8.4px;line-height:8.4px;color:#222;white-space:nowrap;font-weight:bold;left:252.79px;transform:scaleX(0.8190);transform-origin:0 0;">% of Project Signed</span>
<span id="t70" style="position:absolute;top:207.39px;font-size:8.4px;line-height:8.4px;color:#222;white-space:nowrap;font-weight:bold;left:272.41px;transform:scaleX(0.8190);transform-origin:0 0;">24.71 %</span>
<span id="t71" style="position:absolute;top:261.29px;font-size:8.4px;line-height:8.4px;color:#222;white-space:nowrap;font-weight:bold;left:25.70px;transform:scaleX(0.8190);transform-origin:0 0;">Total Count</span>
<span id="t72" style="position:absolute;top:275.39px;font-size:8.4px;line-height:8.4px;color:#222;white-space:nowrap;font-weight:bold;left:40.68px;transform:scaleX(0.8190);transform-origin:0 0;">52</span>
<span id="t73" style="position:absolute;top:261.29px;font-size:8.4px;line-height:8.4px;color:#222;white-space:nowrap;font-weight:bold;left:103.65px;transform:scaleX(0.8190);transform-origin:0 0;">Signed Contract Count</span>
<span id="t74" style="position:absolute;top:275.39px;font-size:8.4px;line-height:8.4px;color:#222;white-space:nowrap;font-weight:bold;left:139.09px;transform:scaleX(0.8190);transform-origin:0 0;">8</span>
<span id="t75" style="position:absolute;top:261.29px;font-size:8.4px;line-height:8.4px;color:#222;white-space:nowrap;font-weight:bold;left:229.41px;transform:scaleX(0.8190);transform-origin:0 0;">% of Contracts Signed</span>
<span id="t76" style="position:absolute;top:275.39px;font-size:8.4px;line-height:8.4px;color:#222;white-space:nowrap;font-weight:bold;left:253.41px;transform:scaleX(0.8190);transform-origin:0 0;">15.38 %</span>
<span id="t77" style="position:absolute;top:328.99px;font-size:8.4px;line-height:8.4px;color:#222;white-space:nowrap;font-weight:bold;left:24.02px;transform:scaleX(0.8190);transform-origin:0 0;">Total Party</span>
<span id="t78" style="position:absolute;top:338.29px;font-size:8.4px;line-height:8.4px;color:#222;white-space:nowrap;font-weight:bold;left:31.59px;transform:scaleX(0.8190);transform-origin:0 0;">Count</span>
<span id="t79" style="position:absolute;top:352.79px;font-size:8.4px;line-height:8.4px;color:#222;white-space:nowrap;font-weight:bold;left:37.68px;transform:scaleX(0.8190);transform-origin:0 0;">34</span>
<span id="t80" style="position:absolute;top:328.99px;font-size:8.4px;line-height:8.4px;color:#222;white-space:nowrap;font-weight:bold;left:85.47px;transform:scaleX(0.8190);transform-origin:0 0;">Total Contract Party</span>
<span id="t81" style="position:absolute;top:338.29px;font-size:8.4px;line-height:8.4px;color:#222;white-space:nowrap;font-weight:bold;left:108.09px;transform:scaleX(0.8190);transform-origin:0 0;">Count</span>
<span id="t82" style="position:absolute;top:352.79px;font-size:8.4px;line-height:8.4px;color:#222;white-space:nowrap;font-weight:bold;left:114.18px;transform:scaleX(0.8190);transform-origin:0 0;">54</span>
<span id="t83" style="position:absolute;top:328.99px;font-size:8.4px;line-height:8.4px;color:#222;white-space:nowrap;font-weight:bold;left:175.47px;transform:scaleX(0.8190);transform-origin:0 0;">Signed Contract Party</span>
<span id="t84" style="position:absolute;top:338.29px;font-size:8.4px;line-height:8.4px;color:#222;white-space:nowrap;font-weight:bold;left:201.59px;transform:scaleX(0.8190);transform-origin:0 0;">Count</span>
<span id="t85" style="position:absolute;top:352.79px;font-size:8.4px;line-height:8.4px;color:#222;white-space:nowrap;font-weight:bold;left:209.59px;transform:scaleX(0.8190);transform-origin:0 0;">9</span>
<span id="t86" style="position:absolute;top:333.89px;font-size:8.4px;line-height:8.4px;color:#222;white-space:nowrap;font-weight:bold;left:261.79px;transform:scaleX(0.8190);transform-origin:0 0;">% of Project Signed</span>
<span id="t87" style="position:absolute;top:352.79px;font-size:8.4px;line-height:8.4px;color:#222;white-space:nowrap;font-weight:bold;left:281.41px;transform:scaleX(0.8190);transform-origin:0 0;">16.67 %</span>
<span id="t88" style="position:absolute;top:406.69px;font-size:8.4px;line-height:8.4px;color:#222;white-space:nowrap;font-weight:bold;left:22.39px;transform:scaleX(0.8190);transform-origin:0 0;">Total Instrument</span>
<span id="t89" style="position:absolute;top:415.99px;font-size:8.4px;line-height:8.4px;color:#222;white-space:nowrap;font-weight:bold;left:39.09px;transform:scaleX(0.8190);transform-origin:0 0;">Count</span>
<span id="t90" style="position:absolute;top:430.19px;font-size:8.4px;line-height:8.4px;color:#222;white-space:nowrap;font-weight:bold;left:45.18px;transform:scaleX(0.8190);transform-origin:0 0;">29</span>
<span id="t91" style="position:absolute;top:406.69px;font-size:8.4px;line-height:8.4px;color:#222;white-space:nowrap;font-weight:bold;left:98.41px;transform:scaleX(0.8190);transform-origin:0 0;">Abstract Instrument</span>
<span id="t92" style="position:absolute;top:415.99px;font-size:8.4px;line-height:8.4px;color:#222;white-space:nowrap;font-weight:bold;left:121.09px;transform:scaleX(0.8190);transform-origin:0 0;">Count</span>
<span id="t93" style="position:absolute;top:430.19px;font-size:8.4px;line-height:8.4px;color:#222;white-space:nowrap;font-weight:bold;left:127.18px;transform:scaleX(0.8190);transform-origin:0 0;">63</span>
<span id="t94" style="position:absolute;top:406.69px;font-size:8.4px;line-height:8.4px;color:#222;white-space:nowrap;font-weight:bold;left:185.74px;transform:scaleX(0.8190);transform-origin:0 0;">Party Instrument</span>
<span id="t95" style="position:absolute;top:415.99px;font-size:8.4px;line-height:8.4px;color:#222;white-space:nowrap;font-weight:bold;left:203.09px;transform:scaleX(0.8190);transform-origin:0 0;">Count</span>
<span id="t96" style="position:absolute;top:430.19px;font-size:8.4px;line-height:8.4px;color:#222;white-space:nowrap;font-weight:bold;left:211.09px;transform:scaleX(0.8190);transform-origin:0 0;">9</span>
<span id="t97" style="position:absolute;top:406.69px;font-size:8.4px;line-height:8.4px;color:#222;white-space:nowrap;font-weight:bold;left:263.12px;transform:scaleX(0.8190);transform-origin:0 0;">Tract Instrument</span>
<span id="t98" style="position:absolute;top:415.99px;font-size:8.4px;line-height:8.4px;color:#222;white-space:nowrap;font-weight:bold;left:280.09px;transform:scaleX(0.8190);transform-origin:0 0;">Count</span>
<span id="t99" style="position:absolute;top:430.19px;font-size:8.4px;line-height:8.4px;color:#222;white-space:nowrap;font-weight:bold;left:286.18px;transform:scaleX(0.8190);transform-origin:0 0;">93</span>
<span id="t100" style="position:absolute;top:484.29px;font-size:8.4px;line-height:8.4px;color:#222;white-space:nowrap;font-weight:bold;left:48.08px;transform:scaleX(0.8190);transform-origin:0 0;">Total Unit Count</span>
<span id="t101" style="position:absolute;top:498.39px;font-size:8.4px;line-height:8.4px;color:#222;white-space:nowrap;font-weight:bold;left:72.59px;transform:scaleX(0.8190);transform-origin:0 0;">1</span>
<span id="t102" style="position:absolute;top:484.29px;font-size:8.4px;line-height:8.4px;color:#222;white-space:nowrap;font-weight:bold;left:213.22px;transform:scaleX(0.8190);transform-origin:0 0;">Gross Acres</span>
<span id="t103" style="position:absolute;top:498.39px;font-size:8.4px;line-height:8.4px;color:#222;white-space:nowrap;font-weight:bold;left:223.01px;transform:scaleX(0.8190);transform-origin:0 0;">280.00</span>
<span id="t104" style="position:absolute;top:552.29px;font-size:8.4px;line-height:8.4px;color:#222;white-space:nowrap;font-weight:bold;left:142.76px;transform:scaleX(0.8190);transform-origin:0 0;">Total Well Count</span>
<span id="t105" style="position:absolute;top:566.19px;font-size:8.4px;line-height:8.4px;color:#222;white-space:nowrap;font-weight:bold;left:167.59px;transform:scaleX(0.8190);transform-origin:0 0;">2</span>
<span id="t106" style="position:absolute;top:618.10px;font-size:8.5px;line-height:8.5px;color:#3d5a78;white-space:nowrap;text-decoration:underline;left:24.00px;transform:scaleX(0.9278);transform-origin:0 0;">View Lease Schedule as PDF</span>
<span id="t107" style="position:absolute;top:636.00px;font-size:8.5px;line-height:8.5px;color:#3d5a78;white-space:nowrap;text-decoration:underline;left:24.00px;transform:scaleX(0.9329);transform-origin:0 0;">View Lease Schedule as Excel</span>
<span id="t108" style="position:absolute;top:162.12px;font-size:8.6px;line-height:8.6px;color:#222;white-space:nowrap;left:374.80px;transform:scaleX(0.9700);transform-origin:0 0;">Tract Statuses (Gross Acres)</span>
<span id="t109" style="position:absolute;top:184.20px;font-size:13px;line-height:13px;color:#1a1a1a;white-space:nowrap;left:500.90px;transform:scaleX(1.0540);transform-origin:0 0;">Tract Statuses (Gross Acres)</span>
<span id="t110" style="position:absolute;top:255.27px;font-size:7px;line-height:7px;color:#3a3a3a;white-space:nowrap;left:672.80px;transform:scaleX(1.0215);transform-origin:0 0;">Negotiating: 31.43%</span>
<span id="t111" style="position:absolute;top:383.07px;font-size:7px;line-height:7px;color:#3a3a3a;white-space:nowrap;left:464.10px;transform:scaleX(1.0411);transform-origin:0 0;">Circulating: 20.71%</span>
<span id="t112" style="position:absolute;top:475.91px;font-size:6.6px;line-height:6.6px;color:#3a3a3a;white-space:nowrap;left:413.70px;transform:scaleX(0.9293);transform-origin:0 0;">Negotiating</span>
<span id="t113" style="position:absolute;top:475.91px;font-size:6.6px;line-height:6.6px;color:#3a3a3a;white-space:nowrap;left:513.70px;transform:scaleX(0.9496);transform-origin:0 0;">Goal Attained</span>
<span id="t114" style="position:absolute;top:475.91px;font-size:6.6px;line-height:6.6px;color:#3a3a3a;white-space:nowrap;left:614.20px;transform:scaleX(0.9499);transform-origin:0 0;">Running Full Title</span>
<span id="t115" style="position:absolute;top:493.61px;font-size:6.6px;line-height:6.6px;color:#3a3a3a;white-space:nowrap;left:413.70px;transform:scaleX(0.9577);transform-origin:0 0;">Full Title Complete</span>
<span id="t116" style="position:absolute;top:493.61px;font-size:6.6px;line-height:6.6px;color:#3a3a3a;white-space:nowrap;left:513.70px;transform:scaleX(0.9723);transform-origin:0 0;">Contacting Parties</span>
<span id="t117" style="position:absolute;top:493.61px;font-size:6.6px;line-height:6.6px;color:#3a3a3a;white-space:nowrap;left:614.20px;transform:scaleX(0.9468);transform-origin:0 0;">Circulating</span>
<span id="t118" style="position:absolute;top:511.11px;font-size:6.6px;line-height:6.6px;color:#3a3a3a;white-space:nowrap;left:413.70px;transform:scaleX(0.9232);transform-origin:0 0;">Declined</span>
<span id="t119" style="position:absolute;top:511.11px;font-size:6.6px;line-height:6.6px;color:#3a3a3a;white-space:nowrap;left:513.70px;transform:scaleX(0.9585);transform-origin:0 0;">HBP</span>
<span id="t120" style="position:absolute;top:511.11px;font-size:6.6px;line-height:6.6px;color:#3a3a3a;white-space:nowrap;left:614.20px;transform:scaleX(0.9554);transform-origin:0 0;">Goal Attained per Broker</span>
<span id="t121" style="position:absolute;top:528.81px;font-size:6.6px;line-height:6.6px;color:#3a3a3a;white-space:nowrap;left:413.70px;transform:scaleX(0.9621);transform-origin:0 0;">Running Cursory Title</span>
<span id="t122" style="position:absolute;top:528.81px;font-size:6.6px;line-height:6.6px;color:#3a3a3a;white-space:nowrap;left:513.70px;transform:scaleX(0.9782);transform-origin:0 0;">Cursory Title Complete</span>
<span id="t123" style="position:absolute;top:135.28px;font-size:9px;line-height:9px;color:#3e6282;white-space:nowrap;text-decoration:underline;left:837.40px;transform:scaleX(0.9191);transform-origin:0 0;">Files / Images</span>
<span id="t124" style="position:absolute;top:150.88px;font-size:9px;line-height:9px;color:#555;white-space:nowrap;left:837.70px;transform:scaleX(0.9571);transform-origin:0 0;">1 file</span>
<span id="t125" style="position:absolute;top:164.38px;font-size:9px;line-height:9px;color:#3e6282;white-space:nowrap;text-decoration:underline;left:837.40px;transform:scaleX(0.9526);transform-origin:0 0;">Notes</span>
<span id="t126" style="position:absolute;top:179.98px;font-size:9px;line-height:9px;color:#555;white-space:nowrap;left:837.70px;transform:scaleX(0.8742);transform-origin:0 0;">Last Project note left by DOM01 on 10/14/2011 10:16:08 AM</span>
<span id="t127" style="position:absolute;top:193.78px;font-size:9px;line-height:9px;color:#3e6282;white-space:nowrap;text-decoration:underline;left:837.40px;transform:scaleX(0.9361);transform-origin:0 0;">Tags</span>
<span id="t128" style="position:absolute;top:208.68px;font-size:9px;line-height:9px;color:#555;white-space:nowrap;left:837.70px;transform:scaleX(0.8666);transform-origin:0 0;">6 Project Tags Created</span>
<span id="t129" style="position:absolute;top:222.50px;font-size:8.5px;line-height:8.5px;color:#333;white-space:nowrap;background:#fff;padding:0 1px;left:826.00px;transform:scaleX(0.9489);transform-origin:0 0;">User Assignments</span>
</body></html>
